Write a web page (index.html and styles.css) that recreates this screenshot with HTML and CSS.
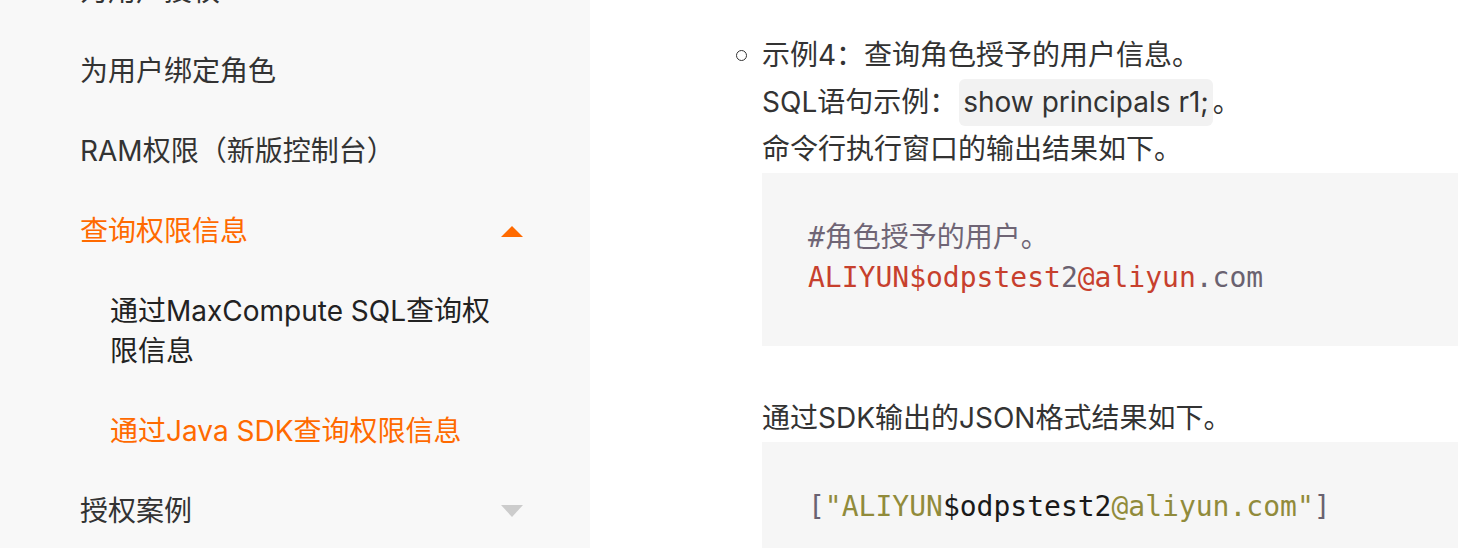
FILE: index.html
```html
<!DOCTYPE html>
<html lang="zh-CN">
<head>
  <meta charset="UTF-8" />
  <meta name="viewport" content="width=device-width, initial-scale=1.0"/>
  <title>查询权限信息</title>
  <link rel="stylesheet" href="styles.css">
</head>
<body>
  <div class="page">
    <!-- left navigation, scrolled a little -->
    <nav class="sidebar">
      <ul class="nav-list">
        <li class="nav-item">为用户授权</li>
        <li class="nav-item">为用户绑定角色</li>
        <li class="nav-item">RAM权限（新版控制台）</li>
        <li class="nav-item open active">
          <span>查询权限信息</span>
          <span class="arrow up"></span>
        </li>
        <li class="nav-item sub">通过MaxCompute SQL查询权限信息</li>
        <li class="nav-item sub active">通过Java SDK查询权限信息</li>
        <li class="nav-item">
          <span>授权案例</span>
          <span class="arrow down"></span>
        </li>
      </ul>
    </nav>

    <!-- document body -->
    <main class="content">
      <ul class="examples">
        <li class="example">
          <p>示例4：查询角色授予的用户信息。</p>
          <p>SQL语句示例：<code class="inline-code">show principals r1;</code>。</p>
          <p>命令行执行窗口的输出结果如下。</p>
          <pre class="code-block"><span class="c-comment">#角色授予的用户。</span>
<span class="c-red">ALIYUN$odpstest</span><span class="c-gray">2</span><span class="c-red">@aliyun</span><span class="c-gray">.com</span></pre>
          <p class="gap">通过SDK输出的JSON格式结果如下。</p>
          <pre class="code-block"><span class="c-gray">[</span><span class="c-olive">"ALIYUN</span>$odpstest2<span class="c-olive">@aliyun.com"</span><span class="c-gray">]</span></pre>
        </li>
      </ul>
    </main>
  </div>
</body>
</html>
```

FILE: styles.css
```css
body {
  margin: 0;
  padding: 0;
  font-family: "Inter", "Noto Sans CJK SC", sans-serif;
  color: #333;
  background-color: #fff;
}
.page {
  display: flex;
  height: 548px;
  overflow: hidden;
}
.sidebar {
  width: 590px;
  flex-shrink: 0;
  background-color: #f8f8f8;
}
.nav-list {
  list-style: none;
  margin: -49px 0 0 0;
  padding: 0;
}
.nav-item {
  display: flex;
  justify-content: space-between;
  align-items: center;
  padding: 20px 67px 20px 80px;
  font-size: 28px;
  line-height: 40px;
  color: #333;
}
.nav-item.sub {
  padding-left: 110px;
  padding-right: 90px;
  color: #222;
}
.nav-item.active {
  color: #ff6a00;
}
.arrow {
  width: 0;
  height: 0;
  border-left: 11px solid transparent;
  border-right: 11px solid transparent;
}
.arrow.up {
  border-bottom: 11px solid #ff6a00;
}
.arrow.down {
  border-top: 12px solid #cccccc;
}
.content {
  flex: 1;
  padding: 32px 0 0 146px;
  font-size: 28px;
  line-height: 47px;
  color: #333;
}
.examples {
  list-style: none;
  margin: 0;
  padding: 0;
}
.example {
  position: relative;
  padding-left: 26px;
}
.example::before {
  content: "";
  position: absolute;
  left: 0;
  top: 18px;
  width: 9px;
  height: 9px;
  border: 1.5px solid #333;
  border-radius: 50%;
}
.example p {
  margin: 0;
}
.example p.gap {
  margin-top: 49px;
}
.inline-code {
  font-family: inherit;
  background-color: #f2f2f2;
  border-radius: 6px;
  padding: 6px 4px 7px;
  margin-left: 2px;
}
.code-block {
  margin: 0;
  padding: 45px 46px 48px;
  background-color: #f6f6f6;
  font-family: "DejaVu Sans Mono", "Noto Sans CJK SC", monospace;
  font-size: 28px;
  line-height: 40px;
  color: #1a1a1a;
}
.c-comment {
  color: #6f6575;
}
.c-red {
  color: #c7402d;
}
.c-gray {
  color: #6a6270;
}
.c-olive {
  color: #918b3b;
}
```
